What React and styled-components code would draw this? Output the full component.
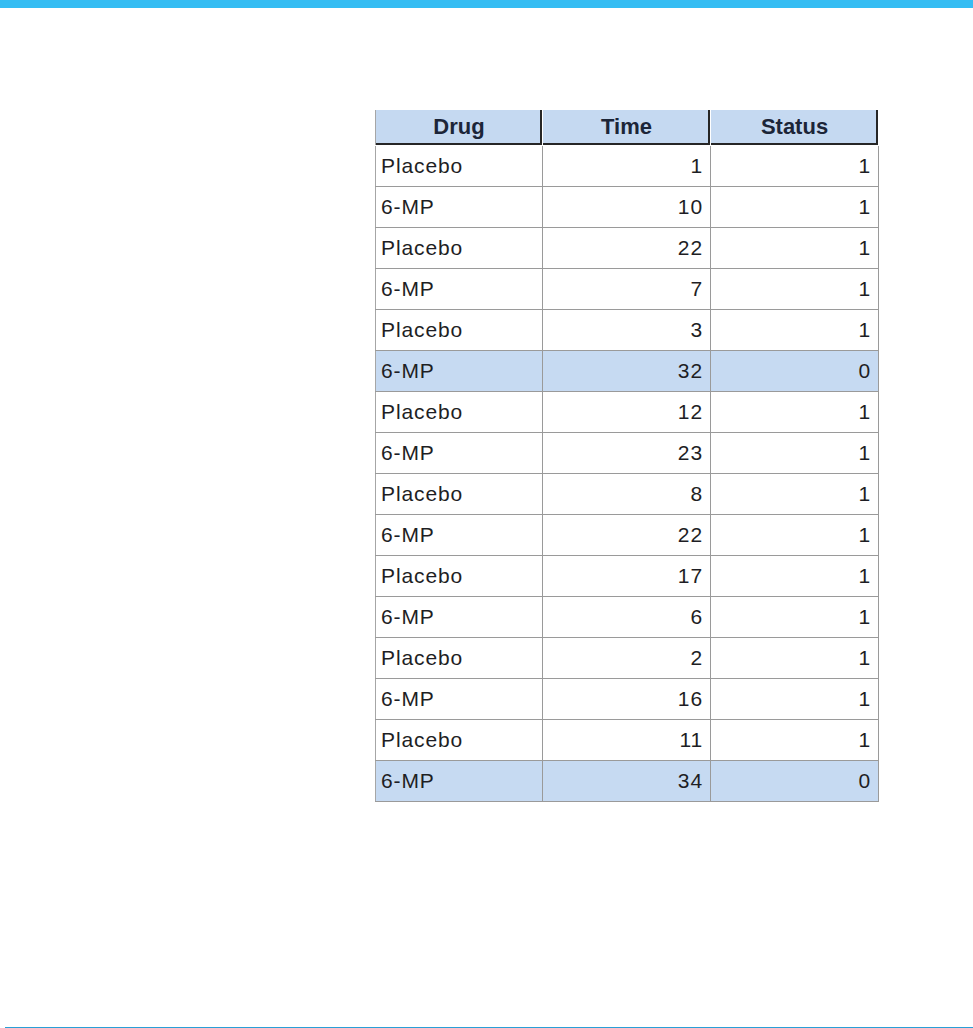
import React from "react";
import styled, { createGlobalStyle } from "styled-components";

const rows = [
  ["Placebo", 1, 1],
  ["6-MP", 10, 1],
  ["Placebo", 22, 1],
  ["6-MP", 7, 1],
  ["Placebo", 3, 1],
  ["6-MP", 32, 0],
  ["Placebo", 12, 1],
  ["6-MP", 23, 1],
  ["Placebo", 8, 1],
  ["6-MP", 22, 1],
  ["Placebo", 17, 1],
  ["6-MP", 6, 1],
  ["Placebo", 2, 1],
  ["6-MP", 16, 1],
  ["Placebo", 11, 1],
  ["6-MP", 34, 0],
];

const GlobalStyle = createGlobalStyle`
  html, body {
    margin: 0;
    padding: 0;
    background: #ffffff;
  }
  body {
    font-family: "Liberation Sans", Arial, sans-serif;
  }
`;

const Page = styled.div`
  width: 973px;
  height: 1028px;
  display: flex;
  flex-direction: column;
  box-sizing: border-box;
`;

const TopBar = styled.div`
  height: 8px;
  background: #35bdf3;
  flex-shrink: 0;
`;

const Body = styled.div`
  flex: 1;
  padding: 102px 0 0 375px;
`;

const BottomRule = styled.div`
  height: 1px;
  margin-left: 5px;
  background: #2a9fd6;
`;

const Table = styled.table`
  border-collapse: collapse;
  border-left: 1px solid #a6a6a6;
  table-layout: fixed;
`;

const HeadCell = styled.th`
  width: ${(p) => p.$w}px;
  height: 33px;
  padding: 0 0 2px;
  line-height: 24px;
  background: #c5d9f1;
  color: #1c2538;
  font-size: 22px;
  font-weight: bold;
  text-align: center;
  box-shadow: inset -2px -2px 0 #262626;
  border-right: 1px solid #ffffff;
  border-bottom: 1px solid #ffffff;
`;

const Row = styled.tr`
  background: ${(p) => (p.$hl ? "#c6daf2" : "#ffffff")};
`;

const Cell = styled.td`
  height: 40px;
  padding: 0 7px 0 5px;
  border-right: 1px solid #9a9a9a;
  border-bottom: 1px solid #9a9a9a;
  color: #1e1e24;
  font-size: 21px;
  letter-spacing: 0.9px;
  text-align: ${(p) => (p.$num ? "right" : "left")};
  white-space: nowrap;
  overflow: hidden;
`;

export default function App() {
  return (
    <>
      <GlobalStyle />
      <Page>
        <TopBar />
        <Body>
          <Table>
            <thead>
              <tr>
                <HeadCell $w={166}>Drug</HeadCell>
                <HeadCell $w={167}>Time</HeadCell>
                <HeadCell $w={167}>Status</HeadCell>
              </tr>
            </thead>
            <tbody>
              {rows.map(([drug, time, status], i) => (
                <Row key={i} $hl={status === 0}>
                  <Cell>{drug}</Cell>
                  <Cell $num>{time}</Cell>
                  <Cell $num>{status}</Cell>
                </Row>
              ))}
            </tbody>
          </Table>
        </Body>
        <BottomRule />
      </Page>
    </>
  );
}
